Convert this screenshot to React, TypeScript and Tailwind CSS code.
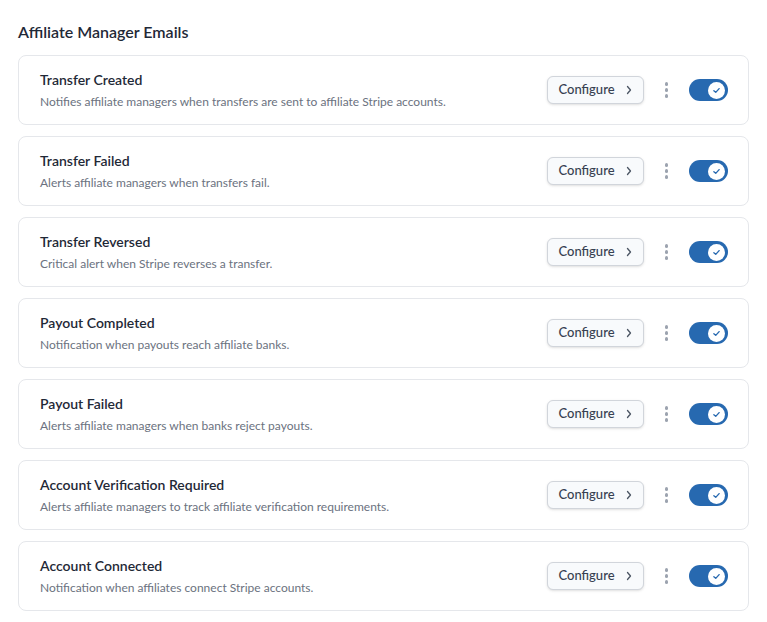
import React from 'react';

interface EmailItem {
  title: string;
  description: string;
}

const items: EmailItem[] = [
  { title: 'Transfer Created', description: 'Notifies affiliate managers when transfers are sent to affiliate Stripe accounts.' },
  { title: 'Transfer Failed', description: 'Alerts affiliate managers when transfers fail.' },
  { title: 'Transfer Reversed', description: 'Critical alert when Stripe reverses a transfer.' },
  { title: 'Payout Completed', description: 'Notification when payouts reach affiliate banks.' },
  { title: 'Payout Failed', description: 'Alerts affiliate managers when banks reject payouts.' },
  { title: 'Account Verification Required', description: 'Alerts affiliate managers to track affiliate verification requirements.' },
  { title: 'Account Connected', description: 'Notification when affiliates connect Stripe accounts.' },
];

const Toggle: React.FC = () => (
  <div className="w-[39px] h-[22px] rounded-full bg-[#2769b0] flex items-center justify-end pr-[3px]">
    <div className="w-[17px] h-[17px] rounded-full bg-white flex items-center justify-center">
      <svg width="9" height="9" viewBox="0 0 12 12" fill="none">
        <path d="M2.5 6.2 L5 8.5 L9.5 3.5" stroke="#2769b0" strokeWidth="1.8" strokeLinecap="round" strokeLinejoin="round" />
      </svg>
    </div>
  </div>
);

const EmailRow: React.FC<{ item: EmailItem }> = ({ item }) => (
  <div className="h-[70px] bg-white border border-[#e5e7eb] rounded-lg flex items-center pl-[21px] pr-[20px]">
    <div className="flex-1 min-w-0">
      <h3 className="text-[14px] leading-5 font-semibold text-[#1f2937]">{item.title}</h3>
      <p className="text-[12px] leading-[18px] mt-[3px] text-[#6b7280]">{item.description}</p>
    </div>
    <button className="h-[28px] w-[97px] flex items-center justify-center gap-[10px] rounded-md border border-[#d1d5db] bg-[#f8fafc] shadow-sm text-[13px] font-medium text-[#374151]">
      Configure
      <svg width="8" height="10" viewBox="0 0 8 10" fill="none">
        <path d="M2.5 1.5 L5.5 5 L2.5 8.5" stroke="#4b5563" strokeWidth="1.3" strokeLinecap="round" strokeLinejoin="round" />
      </svg>
    </button>
    <div className="w-[45px] flex flex-col items-center gap-[2.5px]">
      <span className="w-[3.5px] h-[3.5px] rounded-full bg-[#9ca3af]" />
      <span className="w-[3.5px] h-[3.5px] rounded-full bg-[#9ca3af]" />
      <span className="w-[3.5px] h-[3.5px] rounded-full bg-[#9ca3af]" />
    </div>
    <Toggle />
  </div>
);

const App: React.FC = () => {
  return (
    <div className="min-h-screen bg-white px-[18px] pt-[21px] pb-4" style={{ fontFamily: 'Lato, sans-serif' }}>
      <h2 className="text-[16px] leading-[22px] font-semibold text-[#1f2937] mb-[12px]">Affiliate Manager Emails</h2>
      <div className="flex flex-col gap-[11px]">
        {items.map(item => (
          <EmailRow key={item.title} item={item} />
        ))}
      </div>
    </div>
  );
};

export default App;
